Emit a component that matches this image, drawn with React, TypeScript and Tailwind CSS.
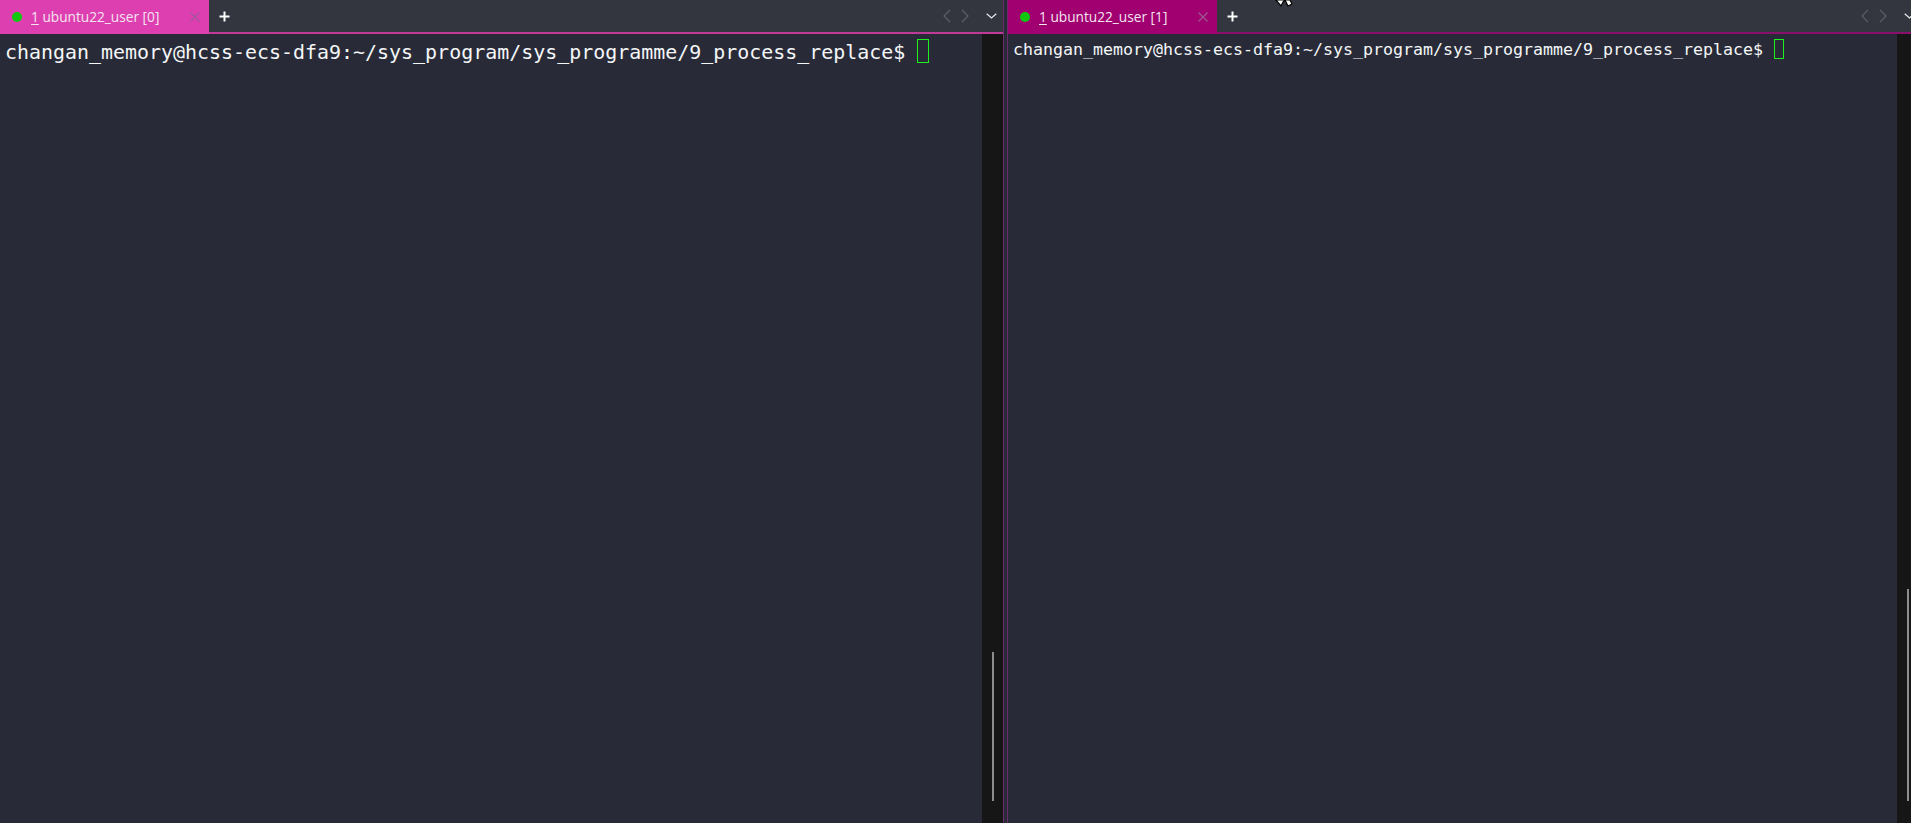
import React from "react";

const UI = { fontFamily: '"Open Sans", "Noto Sans", sans-serif' };
const MONO = { fontFamily: '"DejaVu Sans Mono", monospace' };
const PROMPT = "changan_memory@hcss-ecs-dfa9:~/sys_program/sys_programme/9_process_replace$";

function Chevron({ dir, color }: { dir: "l" | "r" | "d"; color: string }) {
  const d = dir === "l" ? "M7 1 L1 7 L7 13" : dir === "r" ? "M1 1 L7 7 L1 13" : "M0.7 0.7 L5.5 5 L10.3 0.7";
  const w = dir === "d" ? 11 : 8;
  const h = dir === "d" ? 6 : 14;
  return (
    <svg width={w} height={h} viewBox={`0 0 ${w} ${h}`} fill="none" stroke={color} strokeWidth="1.2" className="block shrink-0">
      <path d={d} />
    </svg>
  );
}

function Plus() {
  return (
    <svg width="11" height="11" viewBox="0 0 11 11" fill="none" stroke="#ffffff" strokeWidth="2" className="block shrink-0">
      <path d="M5.5 0.5 V10.5 M0.5 5.5 H10.5" />
    </svg>
  );
}

function Close({ color }: { color: string }) {
  return (
    <svg width="10" height="10" viewBox="0 0 10 10" fill="none" stroke={color} strokeWidth="1.1" className="block shrink-0">
      <path d="M0.5 0.5 L9.5 9.5 M9.5 0.5 L0.5 9.5" />
    </svg>
  );
}

function Tab({ label, bg, closeColor }: { label: string; bg: string; closeColor: string }) {
  return (
    <div className={`flex h-[34px] w-[209px] shrink-0 items-center pb-[1px] pl-3 pr-[9px] ${bg}`}>
      <span className="h-[10px] w-[10px] shrink-0 rounded-full bg-[#10c90f]" />
      <span className="ml-[9px] flex-1 whitespace-nowrap text-[13.7px] leading-[33px] text-[#f4e6f0]" style={UI}>
        <span className="underline underline-offset-2">1</span> {label}
      </span>
      <Close color={closeColor} />
    </div>
  );
}

export default function App() {
  return (
    <div className="flex h-[823px] w-[1911px] overflow-hidden bg-[#282b37]">
      {/* left pane */}
      <div className="flex w-[1003px] shrink-0 flex-col">
        <div className="flex h-[34px] shrink-0 items-start bg-[#33363f]">
          <Tab label="ubuntu22_user [0]" bg="bg-[#de3fb0]" closeColor="#a0589a" />
          <div className="flex h-[34px] flex-1 items-center border-b-2 border-[#c03a98] pl-[10px] pr-[6px]">
            <Plus />
            <div className="ml-auto flex items-center gap-[10px]">
              <Chevron dir="l" color="#5c5e66" />
              <Chevron dir="r" color="#5c5e66" />
              <div className="ml-[7px]">
                <Chevron dir="d" color="#e8e8e8" />
              </div>
            </div>
          </div>
        </div>
        <div className="flex min-h-0 flex-1">
          <div className="flex flex-1 items-start pl-[5px] pt-[5px]">
            <span className="whitespace-pre text-[19.95px] leading-[26px] text-[#f4f6f8]" style={MONO}>
              {PROMPT}
            </span>
            <span className="ml-[12px] h-[24px] w-[12px] shrink-0 border border-[#1ef01e]" />
          </div>
          <div className="flex w-[21px] shrink-0 flex-col items-center justify-end bg-[#161616] pb-[22px]">
            <div className="h-[149px] w-[2px] bg-[#8c8c8c]" />
          </div>
        </div>
      </div>

      {/* splitter */}
      <div className="w-[5px] shrink-0 border-x border-[#6b2a6a]" />

      {/* right pane */}
      <div className="flex min-w-0 flex-1 flex-col">
        <div className="relative flex h-[34px] shrink-0 items-start bg-[#33363f]">
          <Tab label="ubuntu22_user [1]" bg="bg-[#a10070]" closeColor="#9c5a8e" />
          <div className="flex h-[34px] flex-1 items-center border-b-2 border-[#8a0e6b] pl-[10px]">
            <Plus />
            <div className="ml-auto flex items-center gap-[10px]">
              <Chevron dir="l" color="#5c5e66" />
              <Chevron dir="r" color="#5c5e66" />
              <div className="ml-[7px] w-[7px] overflow-hidden">
                <Chevron dir="d" color="#e8e8e8" />
              </div>
            </div>
          </div>
          <svg width="20" height="8" viewBox="0 0 20 8" className="absolute left-[267px] top-0">
            <path d="M1 0 L6 6 L8 2 L10 0 Z M10 0 L13 6 L17 4 L15 0 Z" fill="#ffffff" stroke="#000000" strokeWidth="1.2" />
          </svg>
        </div>
        <div className="flex min-h-0 flex-1">
          <div className="flex flex-1 items-start pl-[5px] pt-[4px]">
            <span className="whitespace-pre text-[16.62px] leading-[24px] text-[#f4f6f8]" style={MONO}>
              {PROMPT}
            </span>
            <span className="ml-[11px] mt-[1px] h-[20px] w-[10px] shrink-0 border border-[#1ef01e]" />
          </div>
          <div className="flex w-[14px] shrink-0 flex-col items-end justify-end bg-[#161616] pb-[22px] pr-[2px]">
            <div className="h-[212px] w-[2px] bg-[#8c8c8c]" />
          </div>
        </div>
      </div>
    </div>
  );
}
